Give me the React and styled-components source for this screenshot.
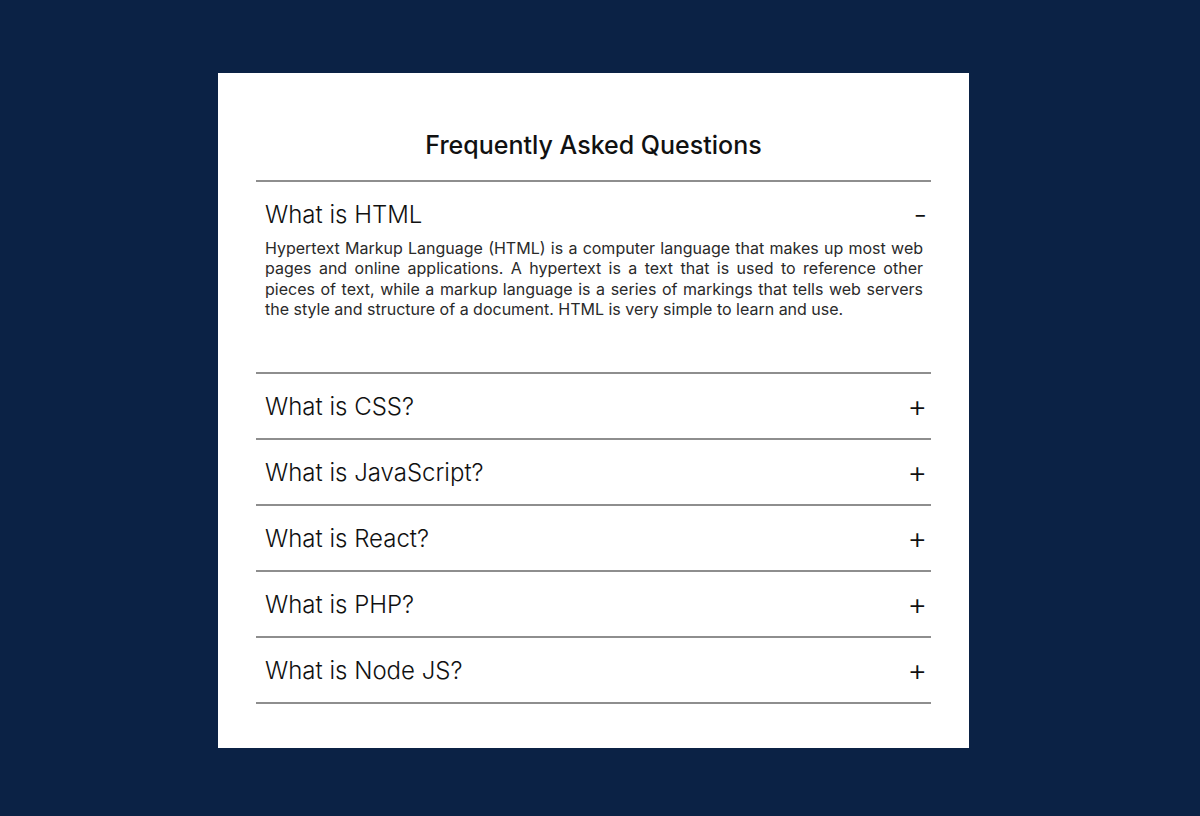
import React, { useState } from 'react';
import styled, { createGlobalStyle } from 'styled-components';

const GlobalStyle = createGlobalStyle`
  * {
    box-sizing: border-box;
  }

  body {
    margin: 0;
    background-color: #0b2245;
    font-family: 'Inter', 'Noto Sans', sans-serif;
  }
`;

// Full-page backdrop that holds the card
const Page = styled.div`
  display: flex;
  justify-content: center;
  min-height: 100vh;
  padding: 73px 13px 68px 0;
`;

const Card = styled.section`
  width: 751px;
  background-color: #ffffff;
  padding: 56px 38px 44px;
`;

const Title = styled.h1`
  margin: 0 0 19px;
  font-size: 25px;
  line-height: 32px;
  font-weight: 500;
  text-align: center;
  color: #111111;
`;

const List = styled.div`
  display: flex;
  flex-direction: column;
  border-bottom: 2px solid #8e8e8e;
`;

const Item = styled.div`
  border-top: 2px solid #8e8e8e;
`;

const Question = styled.button`
  display: flex;
  align-items: center;
  justify-content: space-between;
  width: 100%;
  height: 64px;
  padding: 0 4px 0 9px;
  background: none;
  border: none;
  cursor: pointer;
  font-family: inherit;
  font-size: 24px;
  font-weight: 300;
  color: #111111;
  text-align: left;
`;

const Sign = styled.span`
  font-size: 30px;
  font-weight: 300;
  line-height: 1;
`;

const Answer = styled.p`
  margin: -8px 0 0;
  padding: 0 8px 53px 9px;
  font-size: 16px;
  font-weight: 400;
  line-height: 20.3px;
  text-align: justify;
  color: #2a2a2a;
`;

const faqs = [
  {
    q: 'What is HTML',
    a: 'Hypertext Markup Language (HTML) is a computer language that makes up most web pages and online applications. A hypertext is a text that is used to reference other pieces of text, while a markup language is a series of markings that tells web servers the style and structure of a document. HTML is very simple to learn and use.',
  },
  {
    q: 'What is CSS?',
    a: 'CSS stands for Cascading Style Sheets. It describes how HTML elements are to be displayed on screen, paper, or in other media.',
  },
  {
    q: 'What is JavaScript?',
    a: 'JavaScript is the programming language of the web, used to make pages interactive.',
  },
  {
    q: 'What is React?',
    a: 'React is a JavaScript library for building user interfaces out of components.',
  },
  {
    q: 'What is PHP?',
    a: 'PHP is a server-side scripting language designed for web development.',
  },
  {
    q: 'What is Node JS?',
    a: 'Node.js is a JavaScript runtime that lets you run JavaScript on the server.',
  },
];

function App() {
  const [open, setOpen] = useState(0);

  const toggle = (i) => {
    setOpen(prev => (prev === i ? null : i));
  };

  return (
    <>
      <GlobalStyle />
      <Page>
        <Card>
          <Title>Frequently Asked Questions</Title>
          <List>
            {faqs.map((item, i) => (
              <Item key={item.q}>
                <Question onClick={() => toggle(i)}>
                  {item.q}
                  <Sign>{open === i ? '-' : '+'}</Sign>
                </Question>
                {open === i && <Answer>{item.a}</Answer>}
              </Item>
            ))}
          </List>
        </Card>
      </Page>
    </>
  );
}

export default App;
